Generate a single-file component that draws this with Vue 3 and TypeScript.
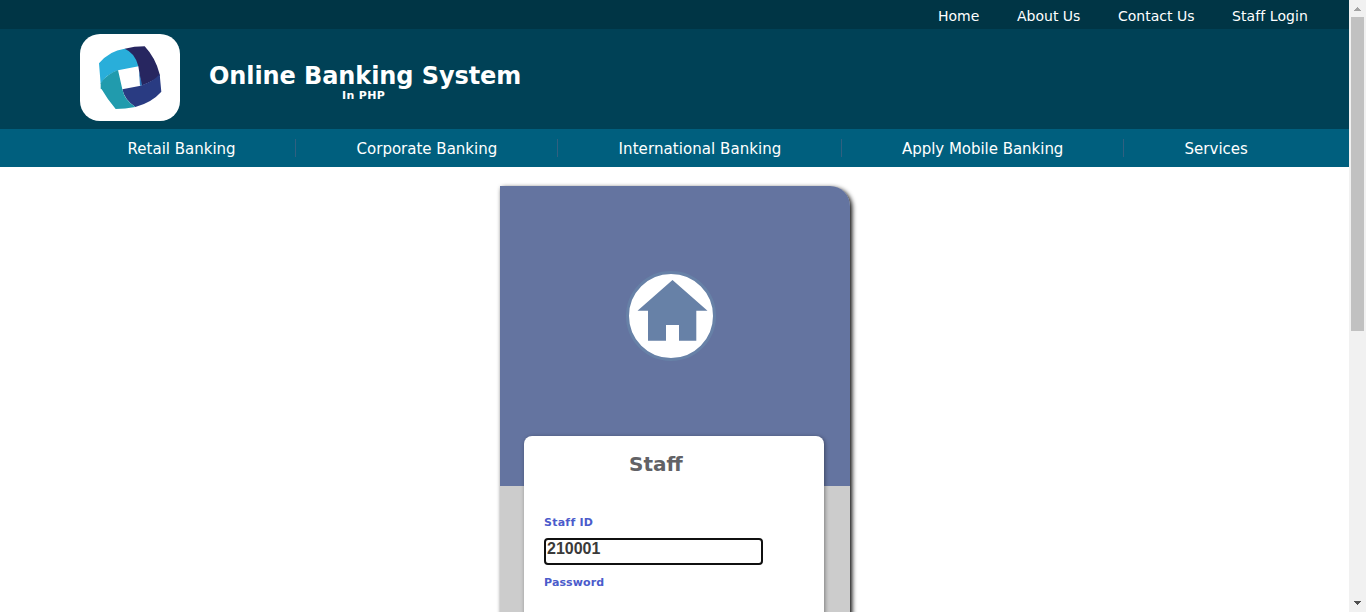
<script setup lang="ts">
import { ref } from 'vue'

interface NavLink {
  label: string
  id: string
}

const topLinks: NavLink[] = [
  { label: 'Home', id: 'home' },
  { label: 'About Us', id: 'about' },
  { label: 'Contact Us', id: 'contact' },
  { label: 'Staff Login', id: 'login' },
]

const mainLinks: NavLink[] = [
  { label: 'Retail Banking', id: 'retail' },
  { label: 'Corporate Banking', id: 'corporate' },
  { label: 'International Banking', id: 'international' },
  { label: 'Apply Mobile Banking', id: 'mobile' },
  { label: 'Services', id: 'services' },
]

const staffId = ref<string>('210001')
</script>

<template>
  <div class="window">
    <div class="page">
      <nav class="topbar">
        <a v-for="link in topLinks" :key="link.id" :class="['top-link', link.id]">{{ link.label }}</a>
      </nav>
      <header class="header">
        <div class="logo">
          <svg width="100" height="87" viewBox="60 42 300 261">
            <path d="M117 130Q148 92 194 86L230 95L236 139L174 151Q140 162 122 192Z" fill="#29aeda" />
            <path d="M194 86Q223 79 254 79Q287 114 299 163L300 168Q279 184 244 197L235 139Q226 99 194 86Z" fill="#272660" />
            <path d="M299 163L304 215Q276 247 226 261Q193 239 187 208L242 197Q281 184 299 163Z" fill="#293b82" />
            <path d="M122 190Q140 162 174 150L187 208Q194 242 226 261Q195 267 167 267Q142 238 125 208L122 206Z" fill="#219bad" />
            <path d="M237 152L246 195L240 198Z" fill="#2c75b7" />
          </svg>
        </div>
        <div class="brand">
          <h1 class="title">Online Banking System</h1>
          <span class="subtitle">In PHP</span>
        </div>
      </header>
      <nav class="mainnav">
        <a v-for="link in mainLinks" :key="link.id" :class="['main-link', link.id]"><span>{{ link.label }}</span></a>
      </nav>
      <main class="card">
        <section class="hero">
          <svg class="home-icon" width="90" height="90" viewBox="0 0 90 90">
            <circle cx="45" cy="45" r="43.5" fill="#fff" stroke="#6781a7" stroke-width="3" />
            <path d="M46.5 9L81.5 39.7H70.3V69.7H53V54H40V69.7H22V39.7H11.5Z" fill="#6781a7" />
          </svg>
        </section>
        <form class="form" @submit.prevent>
          <h2 class="form-title">Staff</h2>
          <label class="label id-label" for="staff-id">Staff ID</label>
          <input id="staff-id" v-model="staffId" class="field" type="text" spellcheck="false" />
          <label class="label pw-label">Password</label>
        </form>
      </main>
    </div>
    <aside class="scrollbar">
      <svg class="arrow" width="17" height="17" viewBox="0 0 17 17" shape-rendering="crispEdges">
        <path d="M8 7h1v1h1v1h1v1h1v1H5v-1h1V9h1V8h1z" fill="#a3a3a3" />
      </svg>
      <div class="thumb"></div>
      <svg class="arrow down" width="17" height="17" viewBox="0 0 17 17" shape-rendering="crispEdges">
        <path d="M5 6h7v1h-1v1h-1v1H9v1H8V9H7V8H6V7H5z" fill="#505050" />
      </svg>
    </aside>
  </div>
</template>

<style>
html,
body {
  margin: 0;
  overflow: hidden;
  background: #fff;
}
</style>

<style scoped>
* {
  box-sizing: border-box;
}
.window {
  display: flex;
  width: 1366px;
  height: 612px;
  overflow: hidden;
  font-family: Verdana, "DejaVu Sans", sans-serif;
}
.page {
  width: 1349px;
  height: 612px;
  overflow: hidden;
  background: #fff;
}
.topbar {
  display: flex;
  justify-content: flex-end;
  height: 29px;
  padding-right: 41px;
  background: #003545;
  color: #fff;
  font-size: 14px;
  line-height: 32px;
}
.top-link {
  white-space: nowrap;
}
.top-link.home { width: 79px; }
.top-link.about { width: 101px; }
.top-link.contact { width: 114px; }
.top-link.login {
  width: 76px;
  letter-spacing: 0.08px;
}
.header {
  display: flex;
  height: 100px;
  padding-left: 80px;
  background: #004156;
}
.logo {
  width: 100px;
  height: 87px;
  margin-top: 5px;
  border-radius: 20px;
  background: #fff;
  overflow: hidden;
}
.logo svg {
  display: block;
}
.brand {
  width: 312px;
  margin: 33px 0 0 29px;
  color: #fff;
}
.title {
  margin: 0;
  font-size: 24px;
  letter-spacing: -0.09px;
  line-height: 29px;
  white-space: nowrap;
}
.subtitle {
  display: block;
  margin: -2px 0 0 133px;
  font-size: 11px;
  font-weight: bold;
  letter-spacing: 0.35px;
  line-height: 14px;
}
.mainnav {
  display: flex;
  height: 38px;
  padding: 10px 0 10px 67px;
  background: #005f7e;
  color: #fff;
  font-size: 15px;
  line-height: 21px;
}
.main-link {
  height: 18px;
  padding-left: 60.6px;
  border-right: 1px solid #306080;
  white-space: nowrap;
}
.main-link.retail { width: 229px; }
.main-link.corporate { width: 262px; }
.main-link.international {
  width: 284px;
  letter-spacing: 0.07px;
}
.main-link.mobile {
  width: 282px;
  padding-left: 60px;
  letter-spacing: -0.03px;
}
.main-link.services { border: 0; }
.card {
  width: 350px;
  height: 560px;
  margin: 19px 0 0 500px;
  border-top-right-radius: 20px;
  background: #ccc;
  box-shadow: 2px 2px 5px #000;
}
.hero {
  display: flex;
  height: 300px;
  padding: 85px 0 0 126px;
  border-top-right-radius: 20px;
  background: #6474a0;
}
.form {
  position: relative;
  display: flex;
  flex-direction: column;
  width: 300px;
  height: 400px;
  margin: -50px 0 0 24px;
  padding-left: 20px;
  border-radius: 8px;
  background: #fff;
  box-shadow: 1px 1px 4px rgba(0, 0, 0, 0.4);
}
.form-title {
  margin: 16px 0 0 85px;
  color: #626266;
  font-size: 20px;
  line-height: 24px;
}
.label {
  color: #4b5bcb;
  font-size: 11px;
  font-weight: bold;
  line-height: 14px;
}
.id-label {
  margin-top: 40px;
  letter-spacing: 0.25px;
}
.pw-label {
  letter-spacing: 0.12px;
}
.field {
  width: 219px;
  height: 27px;
  margin: 8px 0 10px;
  padding: 0 1px 6px;
  border: 2px solid #101010;
  border-radius: 4px;
  outline: none;
  background: #fff;
  color: #3a3a3a;
  font: bold 16px "Liberation Sans", Arial, sans-serif;
}
.pw-label {
  margin-top: 1px;
}
.scrollbar {
  display: flex;
  flex-direction: column;
  width: 17px;
  height: 612px;
  background: #f1f1f1;
}
.arrow {
  flex: none;
}
.thumb {
  width: 13px;
  height: 314px;
  margin-left: 2px;
  background: #c1c1c1;
}
.down {
  margin-top: auto;
}
</style>
